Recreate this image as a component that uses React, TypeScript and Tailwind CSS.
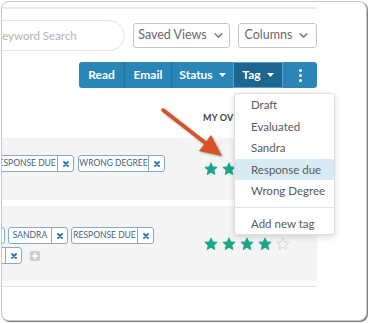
import React from 'react';
import { ChevronDown } from 'lucide-react';

const Star = ({ filled }: { filled: boolean }) => (
  <svg width="14" height="14" viewBox="0 0 24 24" className="shrink-0">
    <polygon
      points="12,1.5 15,8.4 22.5,9.1 16.8,14.1 18.5,21.6 12,17.7 5.5,21.6 7.2,14.1 1.5,9.1 9,8.4"
      fill={filled ? '#16a68a' : 'none'}
      stroke={filled ? '#16a68a' : '#d6d6d6'}
      strokeWidth="1.6"
      strokeLinejoin="round"
    />
  </svg>
);

const Stars = ({ count }: { count: number }) => (
  <div className="flex items-center gap-[4px] pl-[1px]">
    {[0, 1, 2, 3, 4].map((i) => (
      <Star key={i} filled={i < count} />
    ))}
  </div>
);

// tag pill with a remove button, label width given per tag
const Tag = ({ label, w }: { label: string; w: string }) => (
  <div className="flex h-[17px] shrink-0 items-stretch rounded-[3px] border border-[#86abc9] bg-white">
    <div className={`${w} flex items-center justify-center overflow-hidden text-[8.5px] text-[#44617e] whitespace-nowrap`}>
      {label}
    </div>
    <div className="flex w-[16px] items-center justify-center border-l border-[#86abc9]">
      <svg width="6" height="6" viewBox="0 0 6 6">
        <path d="M1 1L5 5M5 1L1 5" stroke="#2c74ad" strokeWidth="1.8" strokeLinecap="round" />
      </svg>
    </div>
  </div>
);

const Caret = () => (
  <svg width="7" height="4" viewBox="0 0 7 4" className="ml-[6px]">
    <path d="M0 0H7L3.5 4Z" fill="white" />
  </svg>
);

const App: React.FC = () => {
  return (
    <div className="relative h-[323px] w-[368px] overflow-hidden bg-white font-['Lato',sans-serif]">
      {/* window frame */}
      <div className="ml-[1px] mt-[1px] h-[320px] w-[366px] overflow-hidden rounded-[8px] border border-[#c6c6c6] bg-white shadow-[1px_1px_1px_rgba(0,0,0,0.55)]">
        <div className="h-full w-[315px] overflow-hidden">
          <div className="mt-[5px] h-[2px] bg-[#ececec]" />

          {/* search + view buttons */}
          <div className="mt-[11px] flex h-[31px] items-center justify-end gap-[8px]">
            <div className="flex h-[31px] w-[147px] shrink-0 items-center rounded-full border border-[#e2e2e2] pl-[16px] text-[11.5px] text-[#b3b3b3]">
              Keyword Search
            </div>
            <div className="flex h-[25px] w-[97px] shrink-0 items-center justify-center gap-[5px] rounded-[3px] border border-[#bfc5cc] text-[12.5px] text-[#6a6a6a]">
              Saved Views
              <ChevronDown size={13} strokeWidth={3} className="text-[#7a8794]" />
            </div>
            <div className="flex h-[25px] w-[79px] shrink-0 items-center justify-center gap-[5px] rounded-[3px] border border-[#bfc5cc] text-[12.5px] text-[#6a6a6a]">
              Columns
              <ChevronDown size={13} strokeWidth={3} className="text-[#7a8794]" />
            </div>
          </div>

          {/* bulk action group */}
          <div className="mt-[11px] flex justify-end">
            <div className="flex h-[26px] overflow-hidden rounded-[3px] bg-[#2b86b8] text-[12px] font-bold text-white">
              <div className="flex w-[46px] items-center justify-center border-r border-[#23729f]">Read</div>
              <div className="flex w-[47px] items-center justify-center border-r border-[#23729f]">Email</div>
              <div className="flex w-[61px] items-center justify-center">
                Status
                <Caret />
              </div>
              <div className="flex w-[50px] items-center justify-center bg-[#1c6690] shadow-[inset_0_0_0_1px_#5a9fd0]">
                Tag
                <Caret />
              </div>
              <div className="flex w-[34px] flex-col items-center justify-center gap-[2px]">
                <span className="h-[3px] w-[3px] rounded-full bg-white" />
                <span className="h-[3px] w-[3px] rounded-full bg-white" />
                <span className="h-[3px] w-[3px] rounded-full bg-white" />
              </div>
            </div>
          </div>

          {/* column header, the rest of it sits under the menu */}
          <div className="h-[50px] pl-[201px] pt-[25px]">
            <div className="w-[31px] overflow-hidden text-[9px] font-bold leading-[9px] tracking-[0.2px] text-[#444] whitespace-nowrap">
              MY OVERALL RATING
            </div>
          </div>

          {/* row 1 */}
          <div className="flex h-[62px] bg-[#f4f4f4]">
            <div className="w-[201px] shrink-0 pt-[17px]">
              <div className="ml-[-11px] flex gap-[4px]">
                <Tag label="RESPONSE DUE" w="w-[65px]" />
                <Tag label="WRONG DEGREE" w="w-[69px]" />
              </div>
            </div>
            <div className="flex items-center">
              <Stars count={4} />
            </div>
          </div>

          <div className="h-[6px]" />

          {/* row 2 */}
          <div className="flex h-[75px] bg-[#f4f4f4]">
            <div className="w-[201px] shrink-0 pt-[21px]">
              <div className="ml-[-72px] flex gap-[3px]">
                <Tag label="EVALUATED" w="w-[57px]" />
                <Tag label="SANDRA" w="w-[42px]" />
                <Tag label="RESPONSE DUE" w="w-[65px]" />
              </div>
              <div className="ml-[-38px] mt-[3px] flex items-center gap-[8px]">
                <Tag label="DRAFT" w="w-[40px]" />
                <div className="flex h-[10px] w-[10px] items-center justify-center rounded-[2px] bg-[#cdcdcd]">
                  <svg width="6" height="6" viewBox="0 0 6 6">
                    <path d="M3 0V6M0 3H6" stroke="white" strokeWidth="1.6" />
                  </svg>
                </div>
              </div>
            </div>
            <div className="flex items-center">
              <Stars count={4} />
            </div>
          </div>

          <div className="mt-[5px] h-[1px] bg-[#e4e4e4]" />
        </div>
      </div>

      {/* tag dropdown menu */}
      <div className="absolute left-[234px] top-[93px] w-[101px] rounded-[3px] border border-[#dedede] bg-white text-[11.5px] text-[#5a5a5a] shadow-[0_2px_6px_rgba(0,0,0,0.15)]">
        <div className="flex h-[21.5px] items-center pl-[16px]">Draft</div>
        <div className="flex h-[21.5px] items-center pl-[16px]">Evaluated</div>
        <div className="flex h-[21.5px] items-center pl-[16px]">Sandra</div>
        <div className="flex h-[21.5px] items-center rounded-[2px] bg-[#d8eaf4] pl-[16px]">Response due</div>
        <div className="flex h-[21.5px] items-center pl-[16px]">Wrong Degree</div>
        <div className="my-[5px] h-[1px] bg-[#e6e6e6]" />
        <div className="flex h-[21.5px] items-center pl-[16px]">Add new tag</div>
      </div>

      {/* annotation arrow */}
      <svg className="pointer-events-none absolute left-0 top-0" width="368" height="323">
        <g style={{ filter: 'drop-shadow(1px 1px 1px rgba(0,0,0,0.35))' }}>
          <line x1="163" y1="110" x2="208" y2="145" stroke="#d4532b" strokeWidth="3.5" strokeLinecap="round" />
          <polygon points="222,156 199,151 211,135" fill="#d4532b" />
        </g>
      </svg>
    </div>
  );
};

export default App;
